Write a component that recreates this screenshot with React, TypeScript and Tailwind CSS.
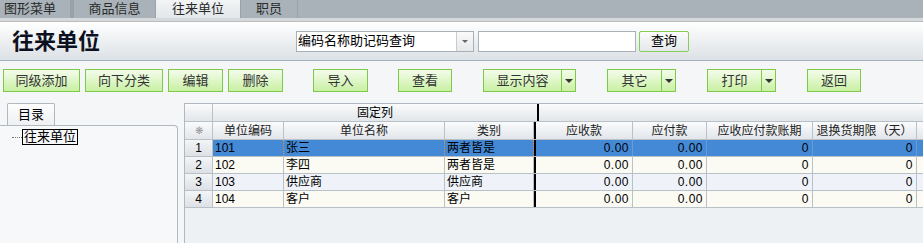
import React from "react";

const font = { fontFamily: '"Liberation Sans", "Noto Sans CJK SC", sans-serif' };

function GreenButton({ label, w, split }: { label: string; w: number; split?: boolean }) {
  return (
    <div
      className="flex h-[23px] border border-[#7fc94a] bg-gradient-to-b from-[#f4fcec] to-[#c9f0a2] text-[13px] text-[#333]"
      style={{ width: w }}
    >
      <div className="flex flex-1 items-center justify-center">{label}</div>
      {split && (
        <div className="flex w-[14px] items-center justify-center border-l border-[#7fc94a]">
          <div className="h-0 w-0 border-x-[4px] border-t-[4px] border-x-transparent border-t-[#333]" />
        </div>
      )}
    </div>
  );
}

const cols = [
  { key: "code", w: 72, title: "单位编码" },
  { key: "name", w: 162, title: "单位名称" },
  { key: "type", w: 90, title: "类别" },
];
const cols2 = [
  { key: "ar", w: 97, title: "应收款" },
  { key: "ap", w: 74, title: "应付款" },
  { key: "term", w: 106, title: "应收应付款账期" },
  { key: "ret", w: 104, title: "退换货期限（天）" },
];

const rows = [
  { code: "101", name: "张三", type: "两者皆是", ar: "0.00", ap: "0.00", term: "0", ret: "0" },
  { code: "102", name: "李四", type: "两者皆是", ar: "0.00", ap: "0.00", term: "0", ret: "0" },
  { code: "103", name: "供应商", type: "供应商", ar: "0.00", ap: "0.00", term: "0", ret: "0" },
  { code: "104", name: "客户", type: "客户", ar: "0.00", ap: "0.00", term: "0", ret: "0" },
];

function Grid() {
  const rowBg = (i: number) =>
    i === 0 ? "bg-[#4489d6]" : i % 2 === 1 ? "bg-[#fbfbf3]" : "bg-[#eff3f9]";
  return (
    <div className="flex flex-1 flex-col border-l border-t border-[#b0b8c2] bg-[#eef1f4] text-[12px] text-black">
      {/* header row 1 */}
      <div className="flex h-[18px] border-b border-[#b8c0c8] bg-gradient-to-b from-[#fafbfc] to-[#e2e6ea]">
        <div className="w-[28px] border-r border-[#b8c0c8]" />
        <div className="flex w-[324px] items-center justify-center">固定列</div>
        <div className="w-[2px] bg-black" />
        <div className="flex-1" />
      </div>
      {/* header row 2 */}
      <div className="flex h-[18px] border-b border-[#b8c0c8] bg-gradient-to-b from-[#fafbfc] to-[#e2e6ea] text-[#222]">
        <div className="flex w-[28px] items-center justify-center border-r border-[#b8c0c8] text-[10px] text-[#999]">
          ❋
        </div>
        {cols.map((c) => (
          <div
            key={c.key}
            className="flex items-center justify-center border-r border-[#b8c0c8] last:border-r-0"
            style={{ width: c.w - 1 }}
          >
            {c.title}
          </div>
        ))}
        <div className="w-[2px] bg-black" />
        {cols2.map((c) => (
          <div
            key={c.key}
            className="flex items-center justify-center border-r border-[#b8c0c8]"
            style={{ width: c.w }}
          >
            {c.title}
          </div>
        ))}
        <div className="flex-1" />
      </div>
      {rows.map((r, i) => (
        <div
          key={r.code}
          className={`flex h-[17px] border-b border-[#b8c0c8] ${rowBg(i)}`}
        >
          <div className="flex w-[28px] items-center justify-center border-r border-[#b8c0c8] bg-gradient-to-b from-[#f3f5f7] to-[#dde1e5] text-[12px]">
            {i + 1}
          </div>
          {cols.map((c) => (
            <div
              key={c.key}
              className={`flex items-center border-r pl-[2px] ${
                i === 0 ? "border-dotted border-[#e09040]" : "border-[#b8c0c8]"
              }`}
              style={{ width: c.w - 1 }}
            >
              {(r as Record<string, string>)[c.key]}
            </div>
          ))}
          <div className="w-[2px] bg-black" />
          {cols2.map((c) => (
            <div
              key={c.key}
              className={`flex items-center justify-end border-r pr-[3px] tracking-[0.5px] ${
                i === 0 ? "border-[#6a9ad0]" : "border-[#b8c0c8]"
              }`}
              style={{ width: c.w }}
            >
              {(r as Record<string, string>)[c.key]}
            </div>
          ))}
          <div className="flex-1" />
        </div>
      ))}
    </div>
  );
}

export default function App() {
  return (
    <div className="flex h-[243px] w-[923px] flex-col overflow-hidden bg-[#f5f6f8]" style={font}>
      {/* top tabs */}
      <div className="flex h-[18px] bg-[#a8b2b8] text-[13px] text-[#2a2a2a]">
        <div className="flex w-[70px] items-center pl-[4px]">图形菜单</div>
        <div className="w-[4px] bg-[#98a2a8]" />
        <div className="flex w-[81px] items-center justify-center">商品信息</div>
        <div className="w-[1px] bg-[#98a2a8]" />
        <div className="flex w-[84px] items-center justify-center bg-gradient-to-b from-[#f2f4f5] to-[#e2e7ea]">
          往来单位
        </div>
        <div className="w-[1px] bg-[#98a2a8]" />
        <div className="flex w-[56px] items-center justify-center">职员</div>
        <div className="w-[1px] bg-[#98a2a8]" />
      </div>
      <div className="h-[4px] border-b border-[#b8bdc2] bg-[#d5d9dc]" />
      {/* header */}
      <div className="flex h-[39px] items-center border-b border-[#a4afba] bg-gradient-to-b from-[#ffffff] to-[#dce1e5]">
        <div className="w-[296px] pl-[12px] text-[22px] font-bold text-[#0c1020]">往来单位</div>
        <div className="flex h-[21px] w-[178px] border border-[#a8b0b8] bg-white text-[13px]">
          <div className="flex flex-1 items-center pl-[1px]">编码名称助记码查询</div>
          <div className="flex w-[17px] items-center justify-center border-l border-[#c8ccd0] bg-gradient-to-b from-[#fafafa] to-[#e6e8ea]">
            <div className="h-0 w-0 border-x-[3px] border-t-[3px] border-x-transparent border-t-[#666]" />
          </div>
        </div>
        <div className="ml-[4px] h-[21px] w-[158px] border border-[#a8b0b8] bg-white" />
        <div className="ml-[3px] flex h-[21px] w-[50px] items-center justify-center rounded-[2px] border border-[#86cc55] bg-gradient-to-b from-[#fbfcfb] to-[#e4e8ea] text-[13px]">
          查询
        </div>
      </div>
      {/* toolbar */}
      <div className="flex h-[38px] items-start bg-[#f5f6f8] pl-[3px] pt-[8px]">
        <GreenButton label="同级添加" w={77} />
        <div className="w-[5px]" />
        <GreenButton label="向下分类" w={78} />
        <div className="w-[5px]" />
        <GreenButton label="编辑" w={55} />
        <div className="w-[5px]" />
        <GreenButton label="删除" w={55} />
        <div className="w-[30px]" />
        <GreenButton label="导入" w={55} />
        <div className="w-[30px]" />
        <GreenButton label="查看" w={54} />
        <div className="w-[31px]" />
        <GreenButton label="显示内容" w={93} split />
        <div className="w-[31px]" />
        <GreenButton label="其它" w={69} split />
        <div className="w-[31px]" />
        <GreenButton label="打印" w={69} split />
        <div className="w-[31px]" />
        <GreenButton label="返回" w={54} />
      </div>
      {/* body */}
      <div className="flex flex-1">
        <div className="flex w-[178px] flex-col pt-[4px]">
          <div className="ml-[7px] flex h-[22px] w-[48px] items-center justify-center rounded-t-[2px] border border-b-0 border-[#b0b8c0] bg-gradient-to-b from-[#fdfdfd] to-[#eef0f2] text-[13px]">
            目录
          </div>
          <div className="flex-1 rounded-tr-[4px] border-r border-t border-[#b0b8c0] bg-[#f7f8fa] pl-[12px] pt-[3px]">
            <div className="flex items-center text-[13px]">
              <div className="w-[10px] border-t border-dotted border-[#777]" />
              <div className="border border-black px-[1px] leading-[14px]">往来单位</div>
            </div>
          </div>
        </div>
        <div className="w-[6px]" />
        <div className="flex flex-1 flex-col pt-[4px]">
          <Grid />
        </div>
      </div>
    </div>
  );
}
